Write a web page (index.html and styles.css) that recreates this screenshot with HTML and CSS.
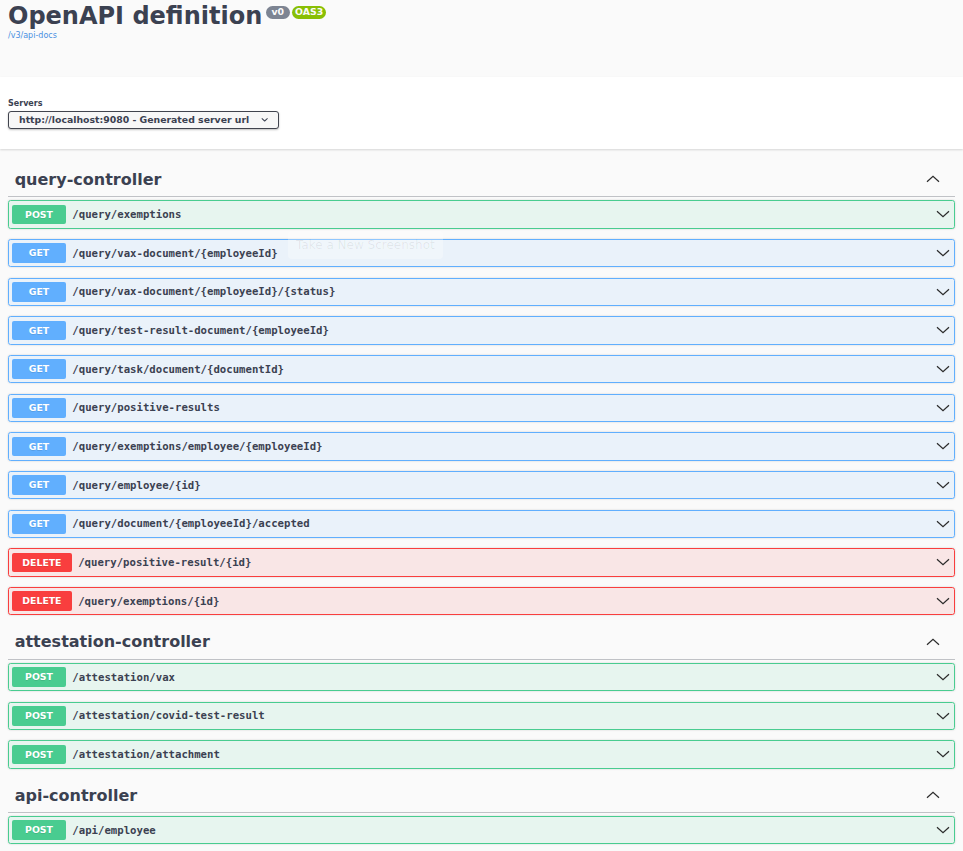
FILE: index.html
```html
<!DOCTYPE html>
<html lang="en">
<head>
<meta charset="utf-8">
<title>Swagger UI</title>
<link rel="stylesheet" href="styles.css">
</head>
<body>
<div class="info">
  <div class="title-row">
    <h2 class="title">OpenAPI definition</h2>
    <span class="badge ver"> v0 </span>
    <span class="badge oas">OAS3</span>
  </div>
  <a class="base-url">/v3/api-docs</a>
</div>

<div class="scheme">
  <div class="servers-title">Servers</div>
  <div class="select">
    <span>http://localhost:9080 - Generated server url</span>
    <svg class="sel-arrow" viewBox="0 0 20 20" width="13.33" height="13.33"><path d="M13.418 7.859a.695.695 0 01.978 0 .68.68 0 010 .969l-3.908 3.83a.697.697 0 01-.979 0l-3.908-3.83a.68.68 0 010-.969.695.695 0 01.978 0L10 11l3.418-3.141z" fill="#3b4151"/></svg>
  </div>
</div>

<div class="wrapper">
  <section class="tag-section">
    <h3 class="tag"><span class="tag-name">query-controller</span><svg class="up" viewBox="0 0 20 20" width="16" height="16"><polyline points="2.5,13.5 10,6.5 17.5,13.5"/></svg></h3>
    <div class="op post"><span class="method">POST</span><span class="path">/query/exemptions</span><svg class="down" viewBox="0 0 20 20" width="16" height="16"><polyline points="2.5,6.5 10,13.5 17.5,6.5"/></svg></div>
    <div class="op get"><span class="method">GET</span><span class="path">/query/vax-document/{employeeId}</span><svg class="down" viewBox="0 0 20 20" width="16" height="16"><polyline points="2.5,6.5 10,13.5 17.5,6.5"/></svg></div>
    <div class="op get"><span class="method">GET</span><span class="path">/query/vax-document/{employeeId}/{status}</span><svg class="down" viewBox="0 0 20 20" width="16" height="16"><polyline points="2.5,6.5 10,13.5 17.5,6.5"/></svg></div>
    <div class="op get"><span class="method">GET</span><span class="path">/query/test-result-document/{employeeId}</span><svg class="down" viewBox="0 0 20 20" width="16" height="16"><polyline points="2.5,6.5 10,13.5 17.5,6.5"/></svg></div>
    <div class="op get"><span class="method">GET</span><span class="path">/query/task/document/{documentId}</span><svg class="down" viewBox="0 0 20 20" width="16" height="16"><polyline points="2.5,6.5 10,13.5 17.5,6.5"/></svg></div>
    <div class="op get"><span class="method">GET</span><span class="path">/query/positive-results</span><svg class="down" viewBox="0 0 20 20" width="16" height="16"><polyline points="2.5,6.5 10,13.5 17.5,6.5"/></svg></div>
    <div class="op get"><span class="method">GET</span><span class="path">/query/exemptions/employee/{employeeId}</span><svg class="down" viewBox="0 0 20 20" width="16" height="16"><polyline points="2.5,6.5 10,13.5 17.5,6.5"/></svg></div>
    <div class="op get"><span class="method">GET</span><span class="path">/query/employee/{id}</span><svg class="down" viewBox="0 0 20 20" width="16" height="16"><polyline points="2.5,6.5 10,13.5 17.5,6.5"/></svg></div>
    <div class="op get"><span class="method">GET</span><span class="path">/query/document/{employeeId}/accepted</span><svg class="down" viewBox="0 0 20 20" width="16" height="16"><polyline points="2.5,6.5 10,13.5 17.5,6.5"/></svg></div>
    <div class="op delete"><span class="method">DELETE</span><span class="path">/query/positive-result/{id}</span><svg class="down" viewBox="0 0 20 20" width="16" height="16"><polyline points="2.5,6.5 10,13.5 17.5,6.5"/></svg></div>
    <div class="op delete"><span class="method">DELETE</span><span class="path">/query/exemptions/{id}</span><svg class="down" viewBox="0 0 20 20" width="16" height="16"><polyline points="2.5,6.5 10,13.5 17.5,6.5"/></svg></div>
  </section>

  <section class="tag-section">
    <h3 class="tag"><span class="tag-name">attestation-controller</span><svg class="up" viewBox="0 0 20 20" width="16" height="16"><polyline points="2.5,13.5 10,6.5 17.5,13.5"/></svg></h3>
    <div class="op post"><span class="method">POST</span><span class="path">/attestation/vax</span><svg class="down" viewBox="0 0 20 20" width="16" height="16"><polyline points="2.5,6.5 10,13.5 17.5,6.5"/></svg></div>
    <div class="op post"><span class="method">POST</span><span class="path">/attestation/covid-test-result</span><svg class="down" viewBox="0 0 20 20" width="16" height="16"><polyline points="2.5,6.5 10,13.5 17.5,6.5"/></svg></div>
    <div class="op post"><span class="method">POST</span><span class="path">/attestation/attachment</span><svg class="down" viewBox="0 0 20 20" width="16" height="16"><polyline points="2.5,6.5 10,13.5 17.5,6.5"/></svg></div>
  </section>

  <section class="tag-section">
    <h3 class="tag"><span class="tag-name">api-controller</span><svg class="up" viewBox="0 0 20 20" width="16" height="16"><polyline points="2.5,13.5 10,6.5 17.5,13.5"/></svg></h3>
    <div class="op post"><span class="method">POST</span><span class="path">/api/employee</span><svg class="down" viewBox="0 0 20 20" width="16" height="16"><polyline points="2.5,6.5 10,13.5 17.5,6.5"/></svg></div>
  </section>
</div>

<div class="ghost">Take a New Screenshot</div>
</body>
</html>
```

FILE: styles.css
```css
html, body {
  margin: 0;
  padding: 0;
}
body {
  background: #fafafa;
  font-family: "DejaVu Sans", sans-serif;
  color: #3b4151;
  position: relative;
}

.info {
  padding: 2px 8px 36.7px;
}
.title-row {
  display: flex;
  align-items: flex-start;
}
.title {
  margin: 0;
  font-size: 24px;
  line-height: 28px;
  font-weight: 700;
  color: #3b4151;
}
.badge {
  margin: 4px 0 0 3.33px;
  padding: 1.2px 2.67px;
  border-radius: 38px;
  font-size: 9.33px;
  font-weight: 700;
  line-height: 10.6px;
  color: #fafafa;
  white-space: pre;
}
.badge.ver { background: #7d8492; }
.badge.oas { background: #89bf04; margin-left: 2.5px; }
.base-url {
  display: block;
  margin-top: 1px;
  font-size: 8px;
  line-height: 9.3px;
  color: #4990e2;
}

.scheme {
  background: #fff;
  box-shadow: 0 1px 2px 0 rgba(0, 0, 0, .15);
  padding: 22px 8px 20px;
  margin: 0 0 14.33px;
}
.servers-title {
  font-size: 8px;
  font-weight: 700;
  line-height: 9.3px;
  margin-bottom: 2.4px;
}
.select {
  display: flex;
  align-items: center;
  box-sizing: border-box;
  width: 270.7px;
  height: 18px;
  padding: 0 6.67px 0 10px;
  border: 1px solid #41444e;
  border-radius: 3px;
  background: #f7f7f7;
  box-shadow: 0 1px 2px 0 rgba(0, 0, 0, .25);
  font-size: 9.33px;
  font-weight: 700;
  color: #3b4151;
  white-space: nowrap;
}
.sel-arrow {
  margin-left: auto;
  flex: none;
}

.wrapper {
  padding: 0 8px;
}
.tag-section {
  display: flex;
  flex-direction: column;
}
.tag {
  display: flex;
  align-items: center;
  margin: 0 0 3.33px;
  padding: 7.67px 14.3px 6.67px 6.67px;
  border-bottom: 1px solid rgba(59, 65, 81, .3);
  font-size: 16px;
  font-weight: 700;
  line-height: 18.6px;
  color: #3b4151;
}
.tag-name {
  flex: 1;
}
.up, .down {
  flex: none;
  fill: none;
  stroke: #2b2b2b;
  stroke-width: 1.5;
}
.up {
  margin-bottom: 2px;
}

.op {
  display: flex;
  align-items: center;
  margin: 0 0 10.33px;
  padding: 3.33px;
  border: 1px solid #000;
  border-radius: 2.67px;
  box-shadow: 0 0 2px rgba(0, 0, 0, .19);
}
.method {
  box-sizing: border-box;
  min-width: 53.33px;
  height: 19.7px;
  line-height: 19.7px;
  padding: 0 10px;
  border-radius: 2px;
  text-align: center;
  font-size: 9.33px;
  font-weight: 700;
  color: #fff;
  text-shadow: 0 1px 0 rgba(0, 0, 0, .1);
}
.path {
  flex: 1;
  padding: 0 6.67px;
  font-family: "DejaVu Sans Mono", monospace;
  font-size: 10.67px;
  font-weight: 700;
  color: #3b4151;
  white-space: nowrap;
}

.op.post { background: rgba(73, 204, 144, .1); border-color: #49cc90; }
.op.post .method { background: #49cc90; }
.op.get { background: rgba(97, 175, 254, .1); border-color: #61affe; }
.op.get .method { background: #61affe; }
.op.delete { background: rgba(249, 62, 62, .1); border-color: #f93e3e; }
.op.delete .method { background: #f93e3e; }

.ghost {
  position: absolute;
  left: 288px;
  top: 231px;
  height: 28px;
  padding: 0 8px;
  line-height: 28px;
  font-size: 12px;
  border-radius: 4px;
  background: rgba(255, 255, 255, .3);
  color: rgba(0, 0, 0, .07);
}
```
